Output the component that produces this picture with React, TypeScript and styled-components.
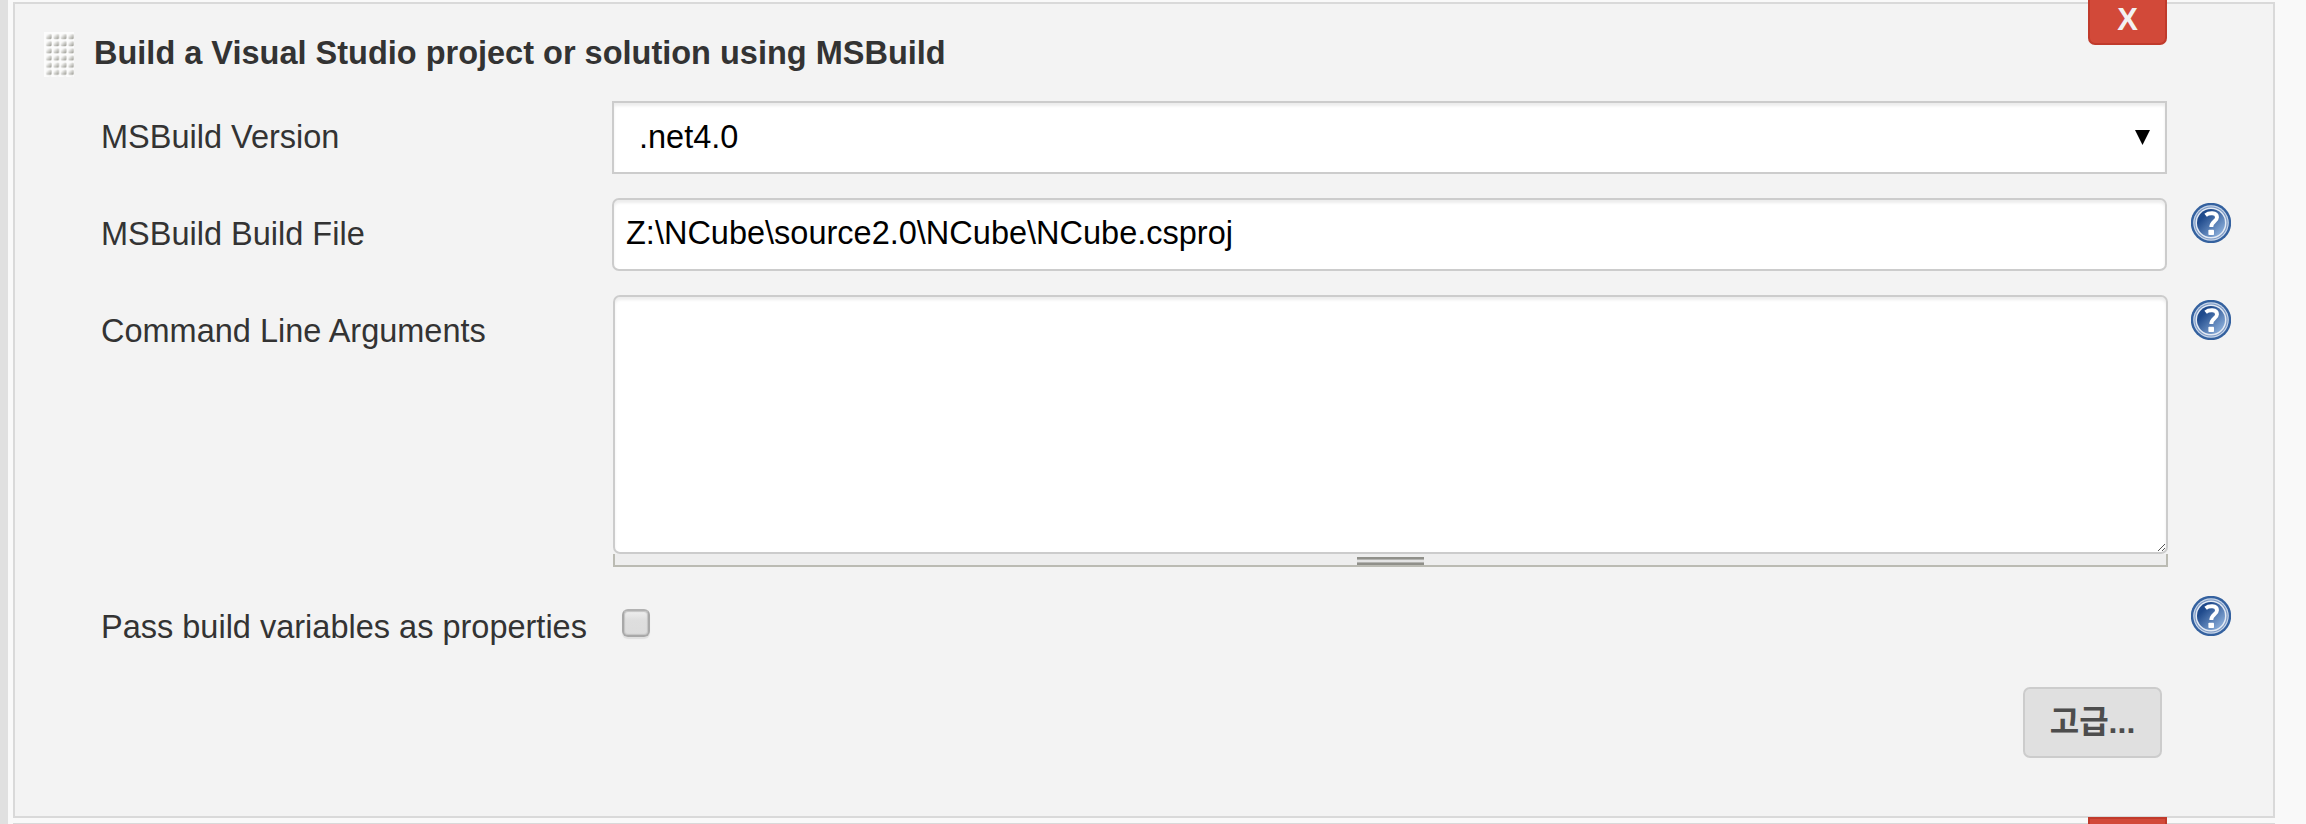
import React from 'react';
import styled, { createGlobalStyle } from 'styled-components';

const GlobalStyle = createGlobalStyle`
  *, *::before, *::after { box-sizing: border-box; }
  body {
    margin: 0;
    background: #f9f9f9;
    color: #333;
    font-family: "Liberation Sans", Arial, "Noto Sans CJK KR", sans-serif;
    font-size: 32.5px;
    line-height: 38px;
  }
`;

const Page = styled.div`
  display: flex;
  height: 824px;
  overflow: hidden;
`;

const SideRail = styled.div`
  flex: none;
  width: 8px;
  background: #e0e0e0;
`;

const Steps = styled.main`
  display: flex;
  flex-direction: column;
  gap: 5px;
  width: 2262px;
  margin-left: 5px;
  padding-top: 2px;
`;

const Step = styled.section`
  position: relative;
  flex: none;
  height: 816px;
  border: 2px solid #d9d9d9;
  background: #f3f3f3;
`;

const DeleteButton = styled.button`
  position: absolute;
  top: -8px;
  right: 106px;
  width: 79px;
  height: 49px;
  padding: 0 0 1px;
  border: 2px solid #c03a2b;
  border-radius: 0 0 7px 7px;
  background: #d24939;
  color: #f2f2f2;
  font: bold 31px/36px "Liberation Sans", Arial, sans-serif;
`;

const StepHeader = styled.header`
  display: flex;
  align-items: center;
  gap: 20px;
  height: 45px;
  margin: 28px 0 24px 29px;
`;

const Title = styled.h2`
  margin: 0;
  padding-bottom: 3px;
  font-size: 32.5px;
  line-height: 38px;
  font-weight: bold;
  white-space: nowrap;
`;

const Row = styled.div<{ $gap: number }>`
  display: grid;
  grid-template-columns: 511px 1556px 63px;
  align-items: start;
  margin: 0 0 ${(p) => p.$gap}px 86px;
`;

const Label = styled.label`
  padding-top: 17px;
  white-space: nowrap;
`;

const HelpSlot = styled.div`
  height: 40px;
  padding-top: 5px;
  margin-left: 23px;
`;

const Field = styled.div<{ $select?: boolean }>`
  display: flex;
  align-items: center;
  justify-content: space-between;
  width: 1555px;
  height: 73px;
  padding: ${(p) => (p.$select ? '0 15px 1px 25px' : '0 12px 3px')};
  border: 2px solid #ccc;
  border-radius: ${(p) => (p.$select ? 0 : 7)}px;
  background: #fff;
  box-shadow: inset 0 3px 3px rgba(0, 0, 0, 0.075);
  color: #000;
`;

const TextArea = styled.div`
  display: flex;
  align-items: flex-end;
  justify-content: flex-end;
  width: 1555px;
  height: 259px;
  margin-left: 1px;
  border: 2px solid #ccc;
  border-radius: 7px;
  background: #fff;
  box-shadow: inset 0 3px 3px rgba(0, 0, 0, 0.075);
`;

const ResizeBar = styled.div`
  display: flex;
  justify-content: center;
  width: 1555px;
  height: 13px;
  margin-left: 1px;
  padding-top: 3px;
  border: 2px solid #bbbbb3;
  border-top: 0;
  background: #eee;
`;

const ResizeHandle = styled.div`
  width: 67px;
  height: 8px;
  background: linear-gradient(#90908a 0 2px, #b3b3b0 2px 3px, #e4e4e4 3px 5px, #b3b3b0 5px 6px, #90908a 6px 8px);
`;

const Checkbox = styled.span`
  display: block;
  width: 28px;
  height: 28px;
  margin: 18px 0 0 10px;
  border: 2px solid #a8a8a8;
  border-top-color: #b2b2b2;
  border-radius: 6px;
  background: linear-gradient(#efefef, #dedede 40%, #dcdcdc);
  box-shadow: 0 2px 1px rgba(0, 0, 0, 0.08), inset 0 0 1px 1px #c4c4c4;
`;

const Actions = styled.div`
  display: flex;
  justify-content: flex-end;
  padding-right: 111px;
`;

const AdvancedButton = styled.button`
  width: 139px;
  height: 71px;
  padding: 0 0 2px;
  border: 2px solid #ccc;
  border-radius: 7px;
  background: #e0e0e0;
  color: #4d4d4d;
  font: bold 32px/40px "Liberation Sans", "Noto Sans CJK KR", sans-serif;
`;

const DragGrip = () => (
  <svg width="30" height="45" viewBox="0 0 30 45">
    <defs>
      <linearGradient id="dot" x1="0" y1="0" x2="1" y2="1">
        <stop offset="0.2" stopColor="#f8f8f7" />
        <stop offset="1" stopColor="#94948c" />
      </linearGradient>
      <pattern id="dots" x="1.5" y="1.5" width="7.4" height="7.15" patternUnits="userSpaceOnUse">
        <rect x="0.5" y="0.5" width="5.6" height="5" rx="1" fill="url(#dot)" />
      </pattern>
    </defs>
    <rect width="30" height="45" fill="#fcfcfc" />
    <rect x="1.5" y="1.5" width="28.5" height="43.5" fill="url(#dots)" />
  </svg>
);

const HelpIcon = () => (
  <svg width="40" height="40" viewBox="0 0 40 40">
    <defs>
      <linearGradient id="orb" x1="0.15" y1="0.15" x2="0.85" y2="0.85">
        <stop offset="0.15" stopColor="#1f4a8c" />
        <stop offset="1" stopColor="#86a9d6" />
      </linearGradient>
    </defs>
    <circle cx="20" cy="20" r="20.2" fill="#34619f" />
    <circle cx="20" cy="20" r="17.8" fill="#c9d7ea" />
    <circle cx="20" cy="20" r="16.6" fill="#7895c2" />
    <circle cx="20" cy="20" r="15.5" fill="#e3eaf4" />
    <circle cx="20" cy="20" r="14" fill="url(#orb)" />
    <path
      d="M14.6 12.2 C17.5 9.8 26 8.9 26 14.2 C26 18.4 20.3 18.2 20.3 24"
      fill="none"
      stroke="#fff"
      strokeWidth="3.9"
    />
    <rect x="17.4" y="26.8" width="5.6" height="5.2" rx="0.8" fill="#fff" />
  </svg>
);

const SelectArrow = () => (
  <svg width="15" height="15" viewBox="0 0 15 15">
    <path d="M0 0H15L7.5 15Z" fill="#000" />
  </svg>
);

const CornerGrip = () => (
  <svg width="10" height="10" viewBox="0 0 10 10">
    <path d="M2 9L9 2M6 9L9 6" stroke="#555" strokeWidth="1" />
  </svg>
);

export default function App() {
  return (
    <>
      <GlobalStyle />
      <Page>
        <SideRail />
        <Steps>
          <Step>
            <DeleteButton>X</DeleteButton>
            <StepHeader>
              <DragGrip />
              <Title>Build a Visual Studio project or solution using MSBuild</Title>
            </StepHeader>
            <Row $gap={24}>
              <Label>MSBuild Version</Label>
              <Field $select>
                .net4.0
                <SelectArrow />
              </Field>
            </Row>
            <Row $gap={24}>
              <Label>MSBuild Build File</Label>
              <Field>Z:\NCube\source2.0\NCube\NCube.csproj</Field>
              <HelpSlot>
                <HelpIcon />
              </HelpSlot>
            </Row>
            <Row $gap={24}>
              <Label>Command Line Arguments</Label>
              <div>
                <TextArea>
                  <CornerGrip />
                </TextArea>
                <ResizeBar>
                  <ResizeHandle />
                </ResizeBar>
              </div>
              <HelpSlot>
                <HelpIcon />
              </HelpSlot>
            </Row>
            <Row $gap={41}>
              <Label>Pass build variables as properties</Label>
              <Checkbox />
              <HelpSlot>
                <HelpIcon />
              </HelpSlot>
            </Row>
            <Actions>
              <AdvancedButton>고급...</AdvancedButton>
            </Actions>
          </Step>
          <Step>
            <DeleteButton aria-label="Delete" />
          </Step>
        </Steps>
      </Page>
    </>
  );
}
